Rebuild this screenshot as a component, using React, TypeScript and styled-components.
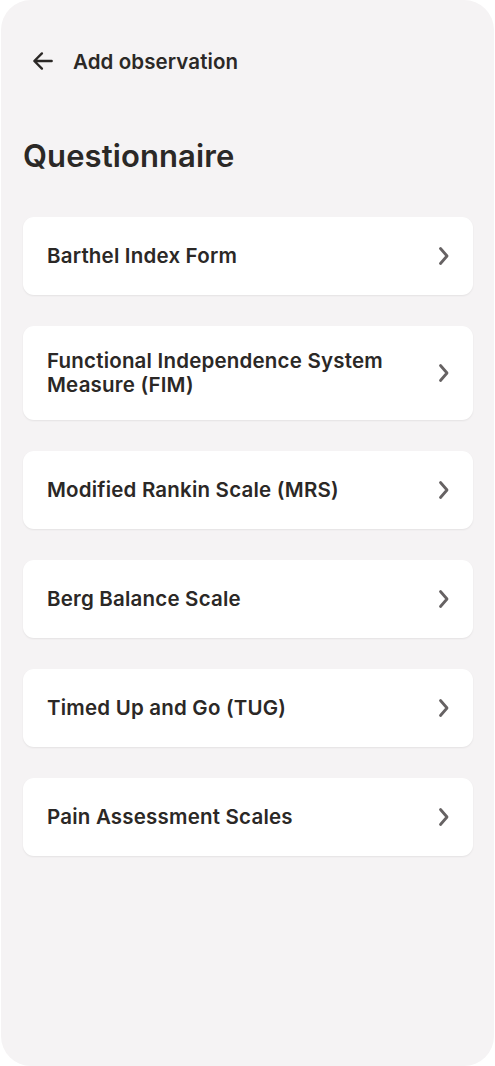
import styled, { createGlobalStyle } from "styled-components";

const GlobalStyle = createGlobalStyle`
  html, body {
    margin: 0;
    padding: 0;
    background: #ffffff;
  }
  * {
    box-sizing: border-box;
  }
  body {
    font-family: Inter, "Noto Sans", sans-serif;
    color: #2b2826;
  }
`;

const Screen = styled.div`
  width: 493px;
  height: 1066px;
  margin-left: 1px;
  background: #f5f3f4;
  border-radius: 30px;
  padding: 40px 22px 0 22px;
  display: flex;
  flex-direction: column;
`;

const TopBar = styled.header`
  display: flex;
  align-items: center;
  gap: 17px;
  height: 42px;
  padding-left: 7px;
`;

const BackButton = styled.button`
  border: none;
  background: none;
  padding: 0;
  display: flex;
  align-items: center;
  color: #2b2826;
  cursor: pointer;
`;

const TopTitle = styled.span`
  font-size: 20.5px;
  font-weight: 600;
  letter-spacing: 0.1px;
`;

const Heading = styled.h1`
  margin: 56px 0 0 0;
  font-size: 31px;
  font-weight: 600;
  line-height: 36px;
  letter-spacing: 0.1px;
`;

const List = styled.div`
  margin-top: 43px;
  display: flex;
  flex-direction: column;
  gap: 31px;
`;

const Card = styled.button<{ $tall?: boolean }>`
  width: 450px;
  min-height: ${(p) => (p.$tall ? 94 : 78)}px;
  border: none;
  border-radius: 11px;
  background: #ffffff;
  box-shadow: 0 1px 2px rgba(0, 0, 0, 0.07);
  display: flex;
  align-items: center;
  justify-content: space-between;
  padding: 0 18px 0 24px;
  text-align: left;
  font-family: inherit;
  cursor: pointer;
`;

const CardLabel = styled.span`
  font-size: 20.5px;
  font-weight: 600;
  line-height: 24px;
  color: #2b2826;
  letter-spacing: 0.2px;
  max-width: 370px;
`;

const Chevron = () => (
  <svg width="24" height="24" viewBox="0 0 24 24" fill="none">
    <path
      d="M9.5 4.5l6.5 7.5-6.5 7.5"
      stroke="#666263"
      strokeWidth="2.8"
      strokeLinecap="round"
      strokeLinejoin="round"
    />
  </svg>
);

const ArrowLeft = () => (
  <svg width="26" height="26" viewBox="0 0 24 24" fill="none">
    <path
      d="M20 12H4.5M11 5l-7 7 7 7"
      stroke="#2b2826"
      strokeWidth="2.2"
      strokeLinecap="round"
      strokeLinejoin="round"
    />
  </svg>
);

const forms = [
  "Barthel Index Form",
  "Functional Independence System Measure (FIM)",
  "Modified Rankin Scale (MRS)",
  "Berg Balance Scale",
  "Timed Up and Go (TUG)",
  "Pain Assessment Scales",
];

export default function App() {
  return (
    <>
      <GlobalStyle />
      <Screen>
        <TopBar>
          <BackButton aria-label="Back">
            <ArrowLeft />
          </BackButton>
          <TopTitle>Add observation</TopTitle>
        </TopBar>
        <Heading>Questionnaire</Heading>
        <List>
          {forms.map((name) => (
            <Card key={name} $tall={name.length > 30}>
              <CardLabel>{name}</CardLabel>
              <Chevron />
            </Card>
          ))}
        </List>
      </Screen>
    </>
  );
}
